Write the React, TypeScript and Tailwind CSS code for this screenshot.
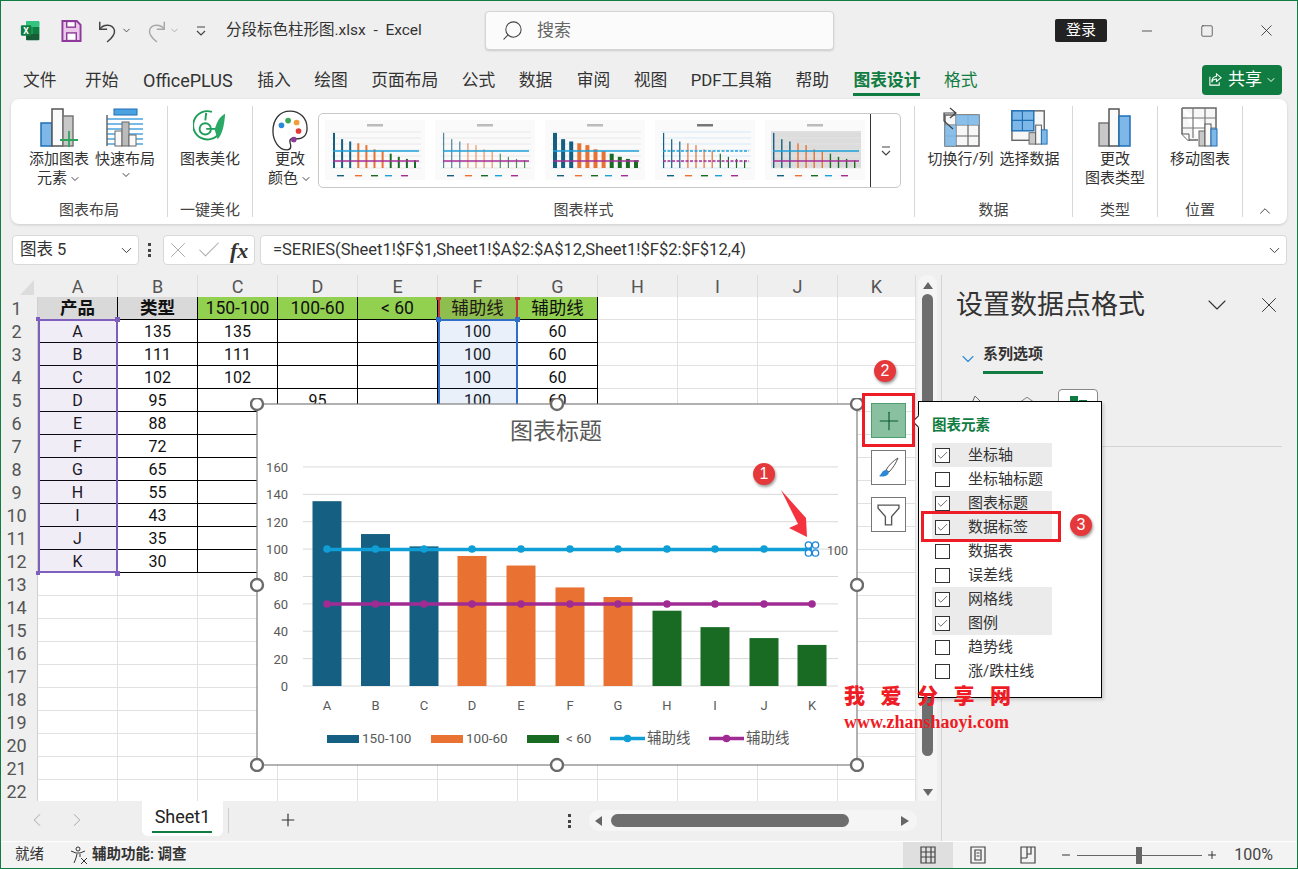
import React from 'react';
import { ChevronDown, ChevronUp, ChevronLeft, ChevronRight, X, Check, Minus, Plus, Square, Search } from 'lucide-react';

const tabs = ['文件', '开始', 'OfficePLUS', '插入', '绘图', '页面布局', '公式', '数据', '审阅', '视图', 'PDF工具箱', '帮助'];
const cols = ['A', 'B', 'C', 'D', 'E', 'F', 'G', 'H', 'I', 'J', 'K'];
// values in D:G from row 6 down sit under the chart, so they are left out
const rows: string[][] = [
  ['产品', '类型', '150-100', '100-60', '< 60', '辅助线', '辅助线'],
  ['A', '135', '135', '', '', '100', '60'],
  ['B', '111', '111', '', '', '100', '60'],
  ['C', '102', '102', '', '', '100', '60'],
  ['D', '95', '', '95', '', '100', '60'],
  ['E', '88', '', '', '', '', ''],
  ['F', '72', '', '', '', '', ''],
  ['G', '65', '', '', '', '', ''],
  ['H', '55', '', '', '', '', ''],
  ['I', '43', '', '', '', '', ''],
  ['J', '35', '', '', '', '', ''],
  ['K', '30', '', '', '', '', ''],
];
const chartData = [135, 111, 102, 95, 88, 72, 65, 55, 43, 35, 30];
const catX = [327, 375.5, 424, 472, 521, 570, 618, 667, 715, 764, 812];
const menuItems: [string, boolean][] = [
  ['坐标轴', true], ['坐标轴标题', false], ['图表标题', true], ['数据标签', true], ['数据表', false], ['误差线', false],
  ['网格线', true], ['图例', true], ['趋势线', false], ['涨/跌柱线', false],
];

const barColor = (v: number) => (v > 100 ? '#156082' : v > 60 ? '#e97132' : '#196b24');
const yOf = (v: number) => 686 - v * 1.369;

function ThumbChart({ variant }: { variant: number }) {
  const w = variant === 2 ? 4 : variant === 0 ? 2 : variant === 4 ? 1.4 : 1.2;
  return (
    <svg viewBox="0 0 100 60" className="h-[60px] w-[100px] bg-[#fafafa]">
      {variant === 4 && <rect x="6" y="11" width="90" height="37" fill="#dcdcdc" />}
      <rect x="42" y="4" width="16" height="2.500" fill={variant === 3 ? '#777' : '#bbb'} />
      {[12, 18, 24, 30, 36, 42, 48].map((y) => (
        <line key={y} x1="6" x2="96" y1={y} y2={y} stroke={variant === 3 ? '#cfe6f5' : '#e4e4e4'} strokeWidth="0.8" />
      ))}
      {chartData.map((v, i) => (
        <rect key={i} x={8 + i * 8.1} y={48 - v * 0.26} width={w} height={v * 0.26} fill={barColor(v)} opacity={variant === 1 ? 0.75 : 1} />
      ))}
      <line x1="8" x2="94" y1="31" y2="31" stroke="#1ba1d9" strokeWidth="1.6" strokeDasharray={variant === 3 ? '3 1.5' : undefined} />
      <line x1="8" x2="94" y1="41" y2="41" stroke="#a62c95" strokeWidth="1.6" strokeDasharray={variant === 3 ? '3 1.5' : undefined} />
      {[['#156082', 12], ['#e97132', 30], ['#196b24', 46], ['#1ba1d9', 60], ['#a62c95', 76]].map(([c, x]) => (
        <rect key={String(x)} x={Number(x)} y="55" width="7" height="1.4" fill={String(c)} />
      ))}
    </svg>
  );
}

function RibbonButton({ icon, lines, w }: { icon: React.ReactNode; lines: React.ReactNode[]; w: string }) {
  return (
    <div className={`flex flex-col items-center ${w}`}>
      <div className="flex h-[42px] items-center justify-center">{icon}</div>
      <div className="mt-[2px] flex flex-col items-center text-[15px] leading-[19px] text-[#333]">
        {lines.map((l, i) => (
          <div key={i} className="flex items-center whitespace-nowrap">{l}</div>
        ))}
      </div>
    </div>
  );
}

const Caret = () => <ChevronDown size={12} className="ml-[2px] text-[#444]" />;

const Group = ({ w, label, children }: { w: string; label: string; children?: React.ReactNode }) => (
  <div className={`relative flex h-[111px] flex-col border-r border-[#d8d8d8] ${w}`}>
    <div className="flex h-[92px] flex-1 items-start justify-center">{children}</div>
    <div className="text-center text-[15px] leading-[13px] text-[#444]">{label}</div>
  </div>
);

function Sheet() {
  const cell = 'flex items-center justify-center';
  return (
    <div className="relative w-[915px]">
      <div className="grid grid-cols-[37px_repeat(10,80px)_78px] grid-rows-[22px_repeat(22,23px)] font-['Roboto','Noto_Sans_CJK_SC',sans-serif] text-[16px] text-[#111]">
        <div className="relative bg-[#efefef]">
          <svg viewBox="0 0 37 22" className="absolute inset-0"><polygon points="33,5 33,20 19,20" fill="#dcdcdc" /></svg>
        </div>
        {cols.map((c) => (
          <div key={c} className={`${cell} border-r border-[#dcdcdc] bg-[#efefef] text-[18px] text-[#555]`}>{c}</div>
        ))}
        {Array.from({ length: 22 }).map((_, r) => (
          <React.Fragment key={r}>
            <div className={`${cell} border-r border-[#cfcfcf] bg-[#efefef] pr-[5px] text-[18px] text-[#555]`}>{r + 1}</div>
            {cols.map((c, ci) => {
              const inTable = r < 12 && ci < 7;
              const head = r === 0 && ci < 7;
              const bg = head ? (ci < 2 ? 'bg-[#d9d9d9] font-bold' : 'bg-[#92d050]') : 'bg-white';
              const border = inTable ? 'border-r border-b border-black' : 'border-r border-b border-[#e1e1e1]';
              const size = head ? 'text-[17.5px]' : '';
              return (
                <div key={c} className={`${cell} ${bg} ${border} ${size} pt-[2px] leading-none`}>
                  {inTable ? rows[r][ci] : ''}
                </div>
              );
            })}
          </React.Fragment>
        ))}
      </div>
      {/* range highlights */}
      <div className="absolute left-[37px] top-[44px] h-[254px] w-[80px] border-2 border-[#7f5fbd] bg-[#6f4fb0]/10" />
      <div className="absolute left-[437px] top-[44px] h-[254px] w-[80px] border-2 border-[#2f6fc9] bg-[#2f6fc9]/10" />
      <div className="absolute left-[437px] top-[22px] h-[23px] w-[80px] border-x-2 border-[#c0393b] bg-[#7a5a3a]/15" />
      <div className="absolute left-[35px] top-[42px] h-[4px] w-[4px] bg-[#7f5fbd]" />
      <div className="absolute left-[114px] top-[42px] h-[5px] w-[5px] bg-[#7f5fbd]" />
      <div className="absolute left-[35px] top-[296px] h-[4px] w-[4px] bg-[#7f5fbd]" />
      <div className="absolute left-[114px] top-[296px] h-[5px] w-[5px] bg-[#7f5fbd]" />
      <div className="absolute left-[435px] top-[42px] h-[5px] w-[5px] bg-[#2f6fc9]" />
      <div className="absolute left-[514px] top-[42px] h-[5px] w-[5px] bg-[#2f6fc9]" />
      <div className="absolute left-[435px] top-[22px] h-[3px] w-[5px] bg-[#c0393b]" />
      <div className="absolute left-[514px] top-[22px] h-[3px] w-[5px] bg-[#c0393b]" />
    </div>
  );
}

function Chart() {
  const handles = [[257, 404], [557, 404], [857, 404], [257, 585], [857, 585], [257, 765], [557, 765], [857, 765]];
  return (
    <svg viewBox="250 398 614 374" className="absolute left-[249px] top-[397px] h-[374px] w-[614px] font-['Roboto','Noto_Sans_CJK_SC',sans-serif]">
      <rect x="257" y="404" width="600" height="361" fill="white" stroke="#7f7f7f" strokeWidth="1.2" />
      <text x="556" y="439" textAnchor="middle" fontSize="23" fill="#595959">图表标题</text>
      {[0, 20, 40, 60, 80, 100, 120, 140, 160].map((v) => (
        <g key={v}>
          <line x1="303" x2="838" y1={yOf(v)} y2={yOf(v)} stroke="#d9d9d9" strokeWidth="1" />
          <text x="288" y={yOf(v) + 5} textAnchor="end" fontSize="13" fill="#595959">{v}</text>
        </g>
      ))}
      {chartData.map((v, i) => (
        <g key={i}>
          <rect x={catX[i] - 14.5} y={yOf(v)} width="29" height={v * 1.369} fill={barColor(v)} />
          <text x={catX[i]} y="710" textAnchor="middle" fontSize="13" fill="#595959">{cols[i]}</text>
        </g>
      ))}
      <line x1="327" x2="812" y1="549.5" y2="549.5" stroke="#0f9ed5" strokeWidth="3.5" />
      <line x1="327" x2="812" y1="604" y2="604" stroke="#a02b93" strokeWidth="3.5" />
      {catX.map((x, i) => (
        <g key={i}>
          {i < 10 && <circle cx={x} cy="549" r="3.8" fill="#0f9ed5" />}
          <circle cx={x} cy="604" r="3.8" fill="#a02b93" />
        </g>
      ))}
      <g fill="white" stroke="#1b87d6" strokeWidth="1.3">
        <circle cx="808.5" cy="545" r="3.2" /><circle cx="815.5" cy="545" r="3.2" />
        <circle cx="808.5" cy="553" r="3.2" /><circle cx="815.5" cy="553" r="3.2" />
      </g>
      <text x="827" y="555" fontSize="12.5" fill="#595959">100</text>
      {/* legend */}
      <rect x="327" y="735" width="32" height="8" fill="#156082" />
      <text x="362" y="743" fontSize="13.5" fill="#595959">150-100</text>
      <rect x="431" y="735" width="32" height="8" fill="#e97132" />
      <text x="466" y="743" fontSize="13.5" fill="#595959">100-60</text>
      <rect x="527" y="735" width="32" height="8" fill="#196b24" />
      <text x="566" y="743" fontSize="13.5" fill="#595959">&lt; 60</text>
      <line x1="610" x2="645" y1="738.5" y2="738.5" stroke="#0f9ed5" strokeWidth="3.5" />
      <circle cx="627.5" cy="738.5" r="3.8" fill="#0f9ed5" />
      <text x="647" y="743" fontSize="14.5" fill="#595959">辅助线</text>
      <line x1="709" x2="744" y1="738.5" y2="738.5" stroke="#a02b93" strokeWidth="3.5" />
      <circle cx="726.5" cy="738.5" r="3.8" fill="#a02b93" />
      <text x="746" y="743" fontSize="14.5" fill="#595959">辅助线</text>
      {handles.map(([x, y], i) => (
        <circle key={i} cx={x} cy={y} r="6" fill="white" stroke="#6b6b6b" strokeWidth="2.4" />
      ))}
    </svg>
  );
}

const Badge = ({ n, cls }: { n: number; cls: string }) => (
  <div className={`absolute flex h-[22px] w-[22px] items-center justify-center rounded-full bg-[#e5383b] font-['Liberation_Sans',sans-serif] text-[16px] text-white shadow-[1px_2px_3px_rgba(0,0,0,0.4)] ${cls}`}>{n}</div>
);

function ChartMenu() {
  return (
    <div className="absolute left-[917px] top-[400px] h-[297px] w-[184px] border border-black bg-white pl-[13px] pt-[14px] shadow-[2px_2px_3px_rgba(0,0,0,0.15)]">
      <div className="h-[27px] text-[14.5px] font-bold leading-[20px] text-[#107c41]">图表元素</div>
      {menuItems.map(([label, on]) => (
        <div key={label} className={`flex h-[24px] w-[120px] items-center pl-[3px] text-[15px] text-[#333] ${on ? 'bg-[#ebebeb]' : ''}`}>
          <span className="flex h-[15px] w-[15px] items-center justify-center border border-[#333] bg-white">
            {on && <Check size={13} strokeWidth={1.2} className="text-[#222]" />}
          </span>
          <span className="ml-[18px] whitespace-nowrap">{label}</span>
        </div>
      ))}
      {/* pointer notch */}
      <div className="absolute left-[-5px] top-[15px] h-[9px] w-[9px] rotate-45 border-b border-l border-black bg-white" />
    </div>
  );
}

export default function App() {
  return (
    <div className="relative h-[869px] w-[1298px] overflow-hidden border border-[#107c41] bg-[#efefef] font-['Roboto','Noto_Sans_CJK_SC',sans-serif] text-[#333]">
      {/* title bar */}
      <div className="flex h-[59px] items-center pl-[19px]">
        <svg viewBox="0 0 22 24" className="h-[21px] w-[21px]">
          <rect x="6" y="1" width="15" height="22" rx="1.5" fill="#21a366" />
          <rect x="6" y="1" width="15" height="7" rx="1.5" fill="#33c481" />
          <rect x="6" y="16" width="15" height="7" fill="#185c37" />
          <rect x="13.5" y="8" width="7.5" height="8" fill="#107c41" />
          <rect x="0" y="6" width="12" height="12" rx="1.5" fill="#107c41" />
          <text x="6" y="15.5" textAnchor="middle" fontSize="10" fontWeight="bold" fill="white">X</text>
        </svg>
        <svg viewBox="0 0 22 24" className="ml-[20px] h-[24px] w-[21px]">
          <path d="M1.5 1.5h15l4 4v17h-19z" fill="#e9c8e9" stroke="#8e3a9a" strokeWidth="2" />
          <rect x="6" y="2" width="9" height="6" fill="white" stroke="#8e3a9a" strokeWidth="1.5" />
          <rect x="6" y="14" width="10" height="8" fill="white" stroke="#8e3a9a" strokeWidth="1.5" />
        </svg>
        <svg viewBox="0 0 24 26" className="ml-[15px] h-[24px] w-[22px]" fill="none" stroke="#444" strokeWidth="1.6">
          <path d="M3 3v8h8" /><path d="M3 11c4-6 14-6 16 1 1 5-3 9-8 13" />
        </svg>
        <ChevronDown size={11} className="ml-[2px] text-[#444]" />
        <svg viewBox="0 0 24 26" className="ml-[13px] h-[24px] w-[22px]" fill="none" stroke="#a8a8a8" strokeWidth="1.6">
          <path d="M21 3v8h-8" /><path d="M21 11c-4-6-14-6-16 1-1 5 3 9 8 13" />
        </svg>
        <ChevronDown size={11} className="ml-[2px] text-[#aaa]" />
        <svg viewBox="0 0 12 12" className="ml-[15px] h-[12px] w-[12px]" fill="none" stroke="#444" strokeWidth="1.2">
          <path d="M2 2h8M2 6l4 4 4-4" />
        </svg>
        <span className="ml-[19px] w-[259px] whitespace-nowrap text-[15.5px]">分段标色柱形图.xlsx&nbsp; -&nbsp; Excel</span>
        <div className="flex h-[39px] w-[349px] items-center rounded-[4px] border border-[#d5d5d5] bg-[#fbfbfb] pl-[15px] shadow-[0_1px_2px_rgba(0,0,0,0.15)]">
          <Search size={23} strokeWidth={1.1} className="-scale-x-100 text-[#444]" />
          <span className="ml-[13px] text-[17px] text-[#666]">搜索</span>
        </div>
        <div className="ml-[221px] flex h-[23px] w-[52px] items-center justify-center rounded-[2px] bg-[#222] text-[15px] text-white">登录</div>
        <Minus size={16} strokeWidth={1.2} className="ml-[32px] text-[#333]" />
        <Square size={14} strokeWidth={1.2} className="ml-[45px] text-[#333]" />
        <X size={19} strokeWidth={1.1} className="ml-[43px] text-[#333]" />
      </div>

      {/* tabs */}
      <div className="flex h-[39px] items-center pl-[22px] pr-[15px] text-[16.75px]">
        <div className="flex gap-[23.5px] pt-[2px]">
          {tabs.map((t, i) => (
            <span key={t} className={`whitespace-nowrap text-[#333] ${i === 1 ? 'ml-[5px]' : ''} ${i === 2 ? 'ml-[1px] text-[18px] leading-[25px]' : ''} ${i === 3 ? 'ml-[1px]' : ''} ${i === 8 ? 'ml-[1px]' : ''}`}>{t}</span>
          ))}
          <span className="relative ml-[1px] whitespace-nowrap font-semibold text-[#107c41]">
            图表设计
            <span className="absolute left-0 right-0 top-[25px] h-[3px] bg-[#107c41]" />
          </span>
          <span className="whitespace-nowrap text-[#107c41]">格式</span>
        </div>
        <div className="ml-auto flex h-[30px] w-[80px] items-center rounded-[4px] bg-[#107c41] pl-[6px] text-[17px] text-white">
          <svg viewBox="0 0 16 16" className="h-[15px] w-[15px]" fill="none" stroke="white" strokeWidth="1.1">
            <path d="M9 2l5 4-5 4V7.5C6 7.500 4.500 9 4 11c0-4 2-6 5-6.500zM2 5v9h10v-3" />
          </svg>
          <span className="ml-[5px]">共享</span>
          <ChevronDown size={12} className="ml-[3px]" />
        </div>
      </div>

      {/* ribbon */}
      <div className="mx-[10px] flex h-[125px] rounded-[8px] bg-white pt-[7px] shadow-[0_1px_3px_rgba(0,0,0,0.15)]">
        <Group w="w-[157px]" label="图表布局">
          <RibbonButton w="w-[72px]" lines={['添加图表', <>元素<Caret /></>]} icon={
            <svg viewBox="0 0 38 40" className="h-[40px] w-[38px]">
              <rect x="1" y="16" width="11" height="23" fill="#7db8e8" stroke="#1f6fb5" strokeWidth="1.5" />
              <rect x="12" y="2" width="11" height="37" fill="#fafafa" stroke="#555" strokeWidth="1.5" />
              <rect x="23" y="9" width="10" height="30" fill="#c8c8c8" stroke="#777" strokeWidth="1.5" />
              <path d="M29 24v16M20 33h18" stroke="#2ea35a" strokeWidth="1.8" />
            </svg>} />
          <RibbonButton w="w-[60px]" lines={['快速布局', <Caret />]} icon={
            <svg viewBox="0 0 38 40" className="h-[40px] w-[38px]">
              {[12, 17, 22, 27, 32, 37].map((y) => <line key={y} x1="1" x2="37" y1={y} y2={y} stroke="#4aa3e0" strokeWidth="1.6" />)}
              <rect x="8" y="2" width="23" height="6" fill="#4aa3e0" stroke="#1f6fb5" />
              <line x1="1" x2="1" y1="8" y2="39" stroke="#666" strokeWidth="1.5" />
              <rect x="9" y="24" width="7" height="15" fill="#fafafa" stroke="#666" />
              <rect x="16" y="15" width="7" height="24" fill="#bbb" stroke="#666" />
              <rect x="23" y="28" width="7" height="11" fill="#fafafa" stroke="#666" />
            </svg>} />
        </Group>
        <Group w="w-[85px]" label="一键美化">
          <RibbonButton w="w-[70px]" lines={['图表美化']} icon={
            <svg viewBox="0 0 36 38" className="h-[38px] w-[34px]" fill="none" stroke="#1f9e5a" strokeWidth="2">
              <path d="M20 3a15 15 0 1 0 8 22" />
              <circle cx="13" cy="21" r="6" />
              <path d="M13 12l1-8M14 21h10" />
              <path d="M34 5c-6 3-9 9-11 17l3 10c5-5 7-14 8-27z" fill="#2aa866" stroke="none" />
            </svg>} />
        </Group>
        <Group w="w-[662px]" label="图表样式">
          <div className="flex h-[92px] w-full items-start pl-[9px]">
            <RibbonButton w="w-[56px]" lines={['更改', <>颜色<Caret /></>]} icon={
              <svg viewBox="0 0 38 44" className="mt-[8px] h-[44px] w-[36px]">
                <path d="M19 1C8 1 1 10 1 22c0 10 6 20 15 20 5 0 4-5 3-8-1-4 3-5 7-4 6 1 11-3 11-11C37 9 30 1 19 1z" fill="white" stroke="#333" strokeWidth="1.4" />
                <circle cx="10" cy="16" r="3" fill="#2b88d8" /><circle cx="17" cy="11" r="3" fill="#3aa757" />
                <circle cx="26" cy="13" r="3" fill="#f29d38" /><circle cx="28" cy="22" r="3" fill="#e53935" />
                <circle cx="23" cy="31" r="3" fill="#8e3a9a" />
              </svg>} />
            <div className="mt-[7px] flex h-[75px] w-[583px] items-start overflow-hidden rounded-[5px] border border-[#c8c8c8] bg-white">
              <div className="flex gap-[10px] pl-[6px] pt-[6px]">
                {[0, 1, 2, 3, 4].map((v) => <ThumbChart key={v} variant={v} />)}
              </div>
              <div className="ml-auto flex h-full w-[30px] shrink-0 items-center justify-center border-l border-[#333]">
                <svg viewBox="0 0 12 12" className="h-[12px] w-[12px]" fill="none" stroke="#444" strokeWidth="1.2"><path d="M2 2h8M2 6l4 4 4-4" /></svg>
              </div>
            </div>
          </div>
        </Group>
        <Group w="w-[158px]" label="数据">
          <RibbonButton w="w-[72px]" lines={['切换行/列']} icon={
            <svg viewBox="0 0 38 40" className="h-[40px] w-[38px]">
              <rect x="3" y="8" width="34" height="31" fill="#f7f7f7" stroke="#666" strokeWidth="1.5" />
              <path d="M3 18h34M3 29h34M14 8v31M26 8v31" stroke="#666" strokeWidth="1.2" />
              <path d="M14 8h23v10H14zM3 18h11v21H3z" fill="#7db8e8" opacity="0.9" />
              <path d="M8 1l6 5-6 5M13 6H2v8l9 8" fill="none" stroke="#444" strokeWidth="1.2" />
            </svg>} />
          <RibbonButton w="w-[66px]" lines={['选择数据']} icon={
            <svg viewBox="0 0 40 40" className="h-[40px] w-[38px]">
              <rect x="1" y="3" width="34" height="31" fill="#f7f7f7" stroke="#666" strokeWidth="1.5" />
              <rect x="1" y="3" width="23" height="21" fill="#7db8e8" stroke="#1f6fb5" strokeWidth="1.5" />
              <path d="M12 3v21M1 13h23" stroke="#1f6fb5" strokeWidth="1.2" />
              <rect x="19" y="26" width="7" height="12" fill="#c8c8c8" stroke="#666" />
              <rect x="26" y="18" width="6" height="20" fill="#fafafa" stroke="#555" />
              <rect x="32" y="23" width="6" height="15" fill="#7db8e8" stroke="#1f6fb5" />
            </svg>} />
        </Group>
        <Group w="w-[85px]" label="类型">
          <RibbonButton w="w-[70px]" lines={['更改', '图表类型']} icon={
            <svg viewBox="0 0 34 40" className="h-[40px] w-[34px]">
              <rect x="1" y="16" width="10" height="23" fill="#c8c8c8" stroke="#777" strokeWidth="1.5" />
              <rect x="11" y="2" width="10" height="37" fill="#fafafa" stroke="#555" strokeWidth="1.5" />
              <rect x="21" y="9" width="11" height="30" fill="#7db8e8" stroke="#1f6fb5" strokeWidth="1.5" />
            </svg>} />
        </Group>
        <Group w="w-[85px]" label="位置">
          <RibbonButton w="w-[70px]" lines={['移动图表']} icon={
            <svg viewBox="0 0 38 40" className="h-[40px] w-[38px]">
              <path d="M1 1h34v24M1 1v26l6 6h10" fill="#f7f7f7" stroke="#666" strokeWidth="1.5" />
              <path d="M1 11h34M1 21h34M12 1v30M24 1v24" stroke="#777" strokeWidth="1.2" />
              <path d="M1 27h7v7" fill="white" stroke="#555" />
              <rect x="18" y="24" width="6" height="15" fill="#c8c8c8" stroke="#666" />
              <rect x="24" y="17" width="6" height="22" fill="#fafafa" stroke="#555" />
              <rect x="30" y="22" width="6" height="17" fill="#7db8e8" stroke="#1f6fb5" />
            </svg>} />
        </Group>
        <div className="flex flex-1 items-end justify-center pb-[4px]"><ChevronUp size={18} strokeWidth={1.2} /></div>
      </div>

      {/* formula bar */}
      <div className="mt-[11px] flex h-[30px] items-center pl-[11px] pr-[10px] text-[16.5px]">
        <div className="flex h-full w-[127px] items-center justify-between rounded-[4px] border border-[#d9d9d9] bg-white pl-[7px] pr-[3px] text-[16.5px]">
          <span>图表 5</span><ChevronDown size={17} strokeWidth={1.3} />
        </div>
        <div className="ml-[9px] flex h-[14px] w-[4px] flex-col justify-between">
          <span className="h-[3px] w-[3px] bg-[#444]" /><span className="h-[3px] w-[3px] bg-[#444]" /><span className="h-[3px] w-[3px] bg-[#444]" />
        </div>
        <div className="ml-[11px] flex h-full w-[92px] items-center rounded-[4px] border border-[#d9d9d9] bg-white pl-[1px]">
          <X size={26} strokeWidth={0.9} className="text-[#aaa]" />
          <Check size={28} strokeWidth={0.9} className="ml-[4px] text-[#aaa]" />
          <span className="ml-[7px] font-['Liberation_Serif',serif] text-[22px] font-bold italic text-[#333]">fx</span>
        </div>
        <div className="ml-[5px] flex h-full flex-1 items-center justify-between rounded-[4px] border border-[#d9d9d9] bg-white pl-[12px] pr-[3px]">
          <span className="whitespace-nowrap">=SERIES(Sheet1!$F$1,Sheet1!$A$2:$A$12,Sheet1!$F$2:$F$12,4)</span>
          <ChevronDown size={17} strokeWidth={1.3} />
        </div>
      </div>

      {/* workspace */}
      <div className="mt-[10px] flex">
        <div className="w-[941px] border-r border-[#d4d4d4]">
          <div className="flex h-[526px] overflow-hidden">
            <div className="h-[526px] overflow-hidden"><Sheet /></div>
            {/* vertical scrollbar */}
            <div className="ml-[2px] flex h-[530px] w-[19px] flex-col items-center rounded-[9px] bg-[#f5f5f5] pt-[7px]">
              <div className="h-0 w-0 border-x-[5px] border-b-[7px] border-x-transparent border-b-[#666]" />
              <div className="mt-[5px] h-[462px] w-[11px] rounded-full bg-[#6e6e6e]" />
              <div className="mt-[33px] h-0 w-0 border-x-[5px] border-t-[7px] border-x-transparent border-t-[#666]" />
            </div>
          </div>
          {/* sheet tabs */}
          <div className="flex h-[40px] items-start">
            <ChevronLeft size={22} strokeWidth={0.9} className="ml-[25px] mt-[8px] text-[#999]" />
            <ChevronRight size={22} strokeWidth={0.9} className="ml-[18px] mt-[8px] text-[#999]" />
            <div className="relative ml-[54px] flex h-[35px] w-[81px] justify-center rounded-b-[6px] bg-white pt-[3px] text-[18px] leading-[26px] text-[#222]">
              Sheet1
              <span className="absolute bottom-[3px] left-[10px] right-[11px] h-[2px] bg-[#107c41]" />
            </div>
            <div className="ml-[5px] mt-[7px] h-[25px] w-px bg-[#ccc]" />
            <Plus size={20} strokeWidth={1.4} className="ml-[49px] mt-[9px] text-[#333]" />
            <div className="ml-[270px] mt-[13px] flex h-[14px] w-[3px] flex-col justify-between">
              <span className="h-[3px] w-[3px] bg-[#444]" /><span className="h-[3px] w-[3px] bg-[#444]" /><span className="h-[3px] w-[3px] bg-[#444]" />
            </div>
            <div className="ml-[18px] mt-[9px] flex h-[21px] w-[328px] items-center rounded-[10px] bg-[#f5f5f5] pl-[6px]">
              <div className="h-0 w-0 border-y-[5px] border-r-[7px] border-y-transparent border-r-[#666]" />
              <div className="ml-[9px] h-[13px] w-[238px] rounded-full bg-[#6e6e6e]" />
              <div className="ml-[52px] h-0 w-0 border-y-[5px] border-l-[8px] border-y-transparent border-l-[#666]" />
            </div>
          </div>
        </div>

        {/* format pane */}
        <div className="flex-1 pl-[14px] pr-[14px]">
          <div className="flex h-[60px] items-center">
            <span className="text-[27px] leading-none text-[#333]">设置数据点格式</span>
            <ChevronDown size={32} strokeWidth={0.8} className="ml-[56px]" />
            <X size={26} strokeWidth={0.9} className="ml-[23px]" />
          </div>
          <div className="mt-[8px] flex items-center pl-[2px]">
            <ChevronDown size={20} strokeWidth={1.3} className="text-[#2b88d8]" />
            <span className="ml-[5px] border-b-[3px] border-[#107c41] pb-[6px] text-[15px] font-semibold leading-[22px] text-[#333]">系列选项</span>
          </div>
          <div className="mt-[15px] flex h-[40px] items-start">
            <svg viewBox="0 0 16 16" className="ml-[14px] mt-[6px] h-[16px] w-[16px]" fill="none" stroke="#666" strokeWidth="1"><path d="M5 1l8 8-5 5-6-6z" /></svg>
            <svg viewBox="0 0 22 16" className="ml-[32px] mt-[6px] h-[16px] w-[18px]" fill="none" stroke="#666" strokeWidth="1"><path d="M11 1l10 7-3 7H4L1 8z" /></svg>
            <div className="ml-[22px] flex h-[40px] w-[40px] items-start justify-center rounded-[4px] border border-[#888] bg-white pt-[6px]">
              <span className="h-[10px] w-[8px] bg-[#107c41]" />
              <span className="ml-[1px] mt-[4px] h-[6px] w-[8px] bg-[#107c41]" />
            </div>
          </div>
          <div className="mt-[17px] h-px w-[326px] bg-[#d4d4d4]" />
        </div>
      </div>

      {/* status bar */}
      <div className="absolute bottom-0 left-0 right-0 flex h-[27px] items-center border-t border-white bg-[#f3f3f3] pl-[14px] text-[14.5px] text-[#333]">
        <span>就绪</span>
        <svg viewBox="0 0 18 18" className="ml-[26px] h-[18px] w-[18px]" fill="none" stroke="#333" strokeWidth="1">
          <circle cx="8" cy="3" r="2" /><path d="M1 5l5 2h4l5-2M7 8l-1 4-2 5M10 8v3M11 12l6 6M17 12l-6 6" />
        </svg>
        <span className="ml-[4px] font-semibold">辅助功能: 调查</span>
        <div className="ml-auto flex h-full items-center">
          <div className="flex h-full w-[50px] items-center justify-center bg-[#dfdfdf]">
            <svg viewBox="0 0 16 18" className="h-[18px] w-[16px]" fill="none" stroke="#444" strokeWidth="1.2"><path d="M1 1h14v16H1zM1 6h14M1 11h14M6 1v16M11 1v16" /></svg>
          </div>
          <div className="flex w-[50px] justify-center">
            <svg viewBox="0 0 16 18" className="h-[18px] w-[16px]" fill="none" stroke="#444" strokeWidth="1.2"><path d="M1 1h14v16H1zM5 4h6v10H5zM6.500 7h3M6.500 10h3" /></svg>
          </div>
          <div className="flex w-[50px] justify-center">
            <svg viewBox="0 0 16 18" className="h-[18px] w-[16px]" fill="none" stroke="#444" strokeWidth="1.2"><path d="M1 1h14v16H1zM1 12h6M7 1v11M11 1v7H7" /></svg>
          </div>
          <Minus size={12} className="ml-[7px] text-[#333]" />
          <div className="relative ml-[5px] h-px w-[125px] bg-[#666]">
            <span className="absolute left-[59px] top-[-8px] h-[17px] w-[6px] bg-[#666]" />
          </div>
          <Plus size={12} className="ml-[4px] text-[#333]" />
          <span className="ml-[16px] mr-[24px] text-[16px] text-[#444]">100%</span>
        </div>
      </div>

      {/* chart and annotations float over the sheet */}
      <Chart />
      <ChartMenu />

      <div className="absolute left-[870px] top-[402px] flex h-[35px] w-[35px] items-center justify-center border border-[#4f9d72] bg-[#88c0a0]">
        <Plus size={30} strokeWidth={0.9} className="text-[#0c5a2e]" />
      </div>
      <div className="absolute left-[870px] top-[449px] flex h-[35px] w-[35px] items-center justify-center border border-[#777] bg-white">
        <svg viewBox="0 0 24 24" className="h-[24px] w-[24px]">
          <path d="M21 2C16 5 12 9 9 14l3 2c4-4 7-9 9-14z" fill="white" stroke="#555" strokeWidth="1" />
          <path d="M9 14c-4 0-4 4-7 6 3 1 9 1 10-4z" fill="#2b88d8" />
        </svg>
      </div>
      <div className="absolute left-[870px] top-[496px] flex h-[35px] w-[35px] items-center justify-center border border-[#777] bg-white">
        <svg viewBox="0 0 24 24" className="h-[25px] w-[25px]" fill="none" stroke="#555" strokeWidth="1.3"><path d="M2 3h20v3l-7 8v8H9v-8L2 6z" /></svg>
      </div>

      <div className="absolute left-[861px] top-[392px] h-[54px] w-[53px] border-[3px] border-[#ee1c25]" />
      <div className="absolute left-[920px] top-[510px] h-[31px] w-[140px] border-[3px] border-[#ee1c25]" />
      <Badge n={2} cls="left-[873px] top-[359px]" />
      <Badge n={3} cls="left-[1069px] top-[513px]" />
      <Badge n={1} cls="left-[752px] top-[462px]" />
      <svg viewBox="0 0 40 60" className="absolute left-[775px] top-[485px] h-[60px] w-[40px]">
        <polygon points="5,4 30,32 31,51 13,42 22,38" fill="#f5333f" />
      </svg>

      <div className="absolute left-[843px] top-[680px] flex w-[167px] justify-between font-['Noto_Sans_CJK_SC',sans-serif] text-[21px] font-black leading-[26px] text-[#ee1c25]">
        <span>我</span><span>爱</span><span>分</span><span>享</span><span>网</span>
      </div>
      <div className="absolute left-[843px] top-[712px] whitespace-nowrap font-['Liberation_Serif',serif] text-[18px] font-bold leading-[18px] text-[#ee1c25]">www.zhanshaoyi.com</div>
    </div>
  );
}
